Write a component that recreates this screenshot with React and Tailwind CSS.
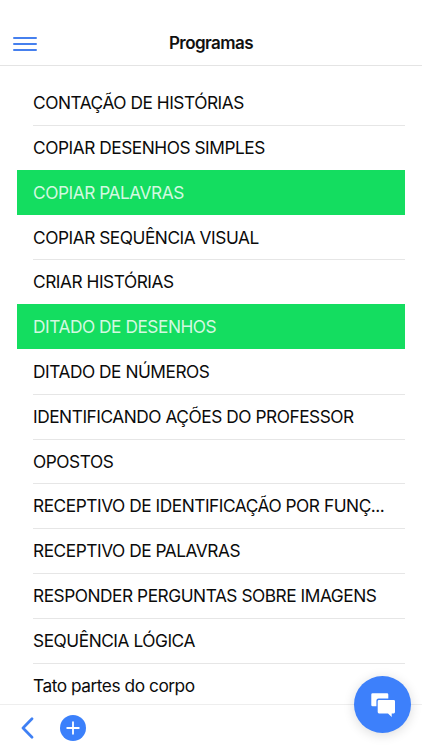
import { useState } from 'react';

const PROGRAMS = [
  { name: 'CONTAÇÃO DE HISTÓRIAS' },
  { name: 'COPIAR DESENHOS SIMPLES' },
  { name: 'COPIAR PALAVRAS', done: true },
  { name: 'COPIAR SEQUÊNCIA VISUAL' },
  { name: 'CRIAR HISTÓRIAS' },
  { name: 'DITADO DE DESENHOS', done: true },
  { name: 'DITADO DE NÚMEROS' },
  { name: 'IDENTIFICANDO AÇÕES DO PROFESSOR' },
  { name: 'OPOSTOS' },
  { name: 'RECEPTIVO DE IDENTIFICAÇÃO POR FUNÇ...' },
  { name: 'RECEPTIVO DE PALAVRAS' },
  { name: 'RESPONDER PERGUNTAS SOBRE IMAGENS' },
  { name: 'SEQUÊNCIA LÓGICA' },
  { name: 'Tato partes do corpo' },
];

const ProgramRow = ({ name, done, divider, onToggle }) => (
  <li
    onClick={onToggle}
    className={`h-[44.8px] shrink-0 pl-[16.5px] cursor-pointer ${done ? 'bg-[#14dd60] text-[#d3f9e0]' : 'text-[#0b0b0b]'}`}
  >
    <div
      className={`flex h-full items-center border-t pb-[0.6px] text-[17.3px] leading-none tracking-[-0.46px] whitespace-nowrap ${divider ? 'border-[#e6e6e6]' : 'border-transparent'}`}
    >
      {name}
    </div>
  </li>
);

export default function App() {
  const [programs, setPrograms] = useState(PROGRAMS);

  const toggle = (idx) =>
    setPrograms(programs.map((p, i) => (i === idx ? { ...p, done: !p.done } : p)));

  const hasDivider = (idx) => idx > 0 && !programs[idx].done && !programs[idx - 1].done;

  return (
    <main className="relative flex h-[750px] w-[422px] flex-col overflow-hidden bg-white font-['Inter',sans-serif]">
      {/* Header */}
      <header className="grid h-[66px] shrink-0 grid-cols-[1fr_auto_1fr] items-center border-b border-[#e4e4e4] px-[13px] pt-[22px]">
        <button aria-label="Menu" className="justify-self-start">
          <svg width="24" height="16" viewBox="0 0 24 16" fill="none" stroke="#4680ee" strokeWidth="2" strokeLinecap="round">
            <path d="M1 2h22M1 8h22M1 14h22" />
          </svg>
        </button>
        <h1 className="text-[17px] leading-none font-semibold tracking-[-0.55px] text-[#111]">Programas</h1>
      </header>

      {/* Program list */}
      <ul className="flex min-h-0 flex-1 flex-col overflow-hidden pt-[14.3px] pr-[17px] pl-[16.5px]">
        {programs.map((program, idx) => (
          <ProgramRow
            key={program.name}
            {...program}
            divider={hasDivider(idx)}
            onToggle={() => toggle(idx)}
          />
        ))}
      </ul>

      {/* Bottom toolbar */}
      <footer className="flex h-[46px] shrink-0 items-center border-t border-[#eeeeee] bg-white pl-[21px]">
        <button aria-label="Voltar">
          <svg width="13" height="22" viewBox="0 0 13 22" fill="none" stroke="#3f80f4" strokeWidth="2.7" strokeLinecap="round" strokeLinejoin="round">
            <path d="M11 1.8 2 11l9 9.2" />
          </svg>
        </button>
        <button aria-label="Adicionar" className="ml-[26px]">
          <svg width="26" height="26" viewBox="0 0 26 26" fill="none">
            <circle cx="13" cy="13" r="13" fill="#3b80fb" />
            <path d="M13 7.2v11.6M7.2 13h11.6" stroke="#fff" strokeWidth="1.8" strokeLinecap="round" />
          </svg>
        </button>
      </footer>

      {/* Floating chat button */}
      <button
        aria-label="Chat"
        className="absolute right-[10.6px] bottom-[16.6px] flex size-[57.2px] items-center justify-center rounded-full bg-[#3d80fb] shadow-[0_2px_12px_rgba(0,0,0,0.14)]"
      >
        <svg width="24" height="24" viewBox="0 0 24 24" fill="#fff">
          <path d="M1.600.2h14.400a1.300 1.300 0 0 1 1.300 1.300v3.900H7.600A2.200 2.200 0 0 0 5.400 7.600v5.600H1.600A1.300 1.300 0 0 1 .3 11.900V1.500A1.300 1.300 0 0 1 1.600.2Z" />
          <path d="M8 6.900h14.700A1.300 1.300 0 0 1 24 8.200v10.900a1.300 1.300 0 0 1-1.300 1.300h-2V24l-3.700-3.600H8a1.300 1.300 0 0 1-1.300-1.300V8.200A1.300 1.300 0 0 1 8 6.900Z" />
        </svg>
      </button>
    </main>
  );
}
